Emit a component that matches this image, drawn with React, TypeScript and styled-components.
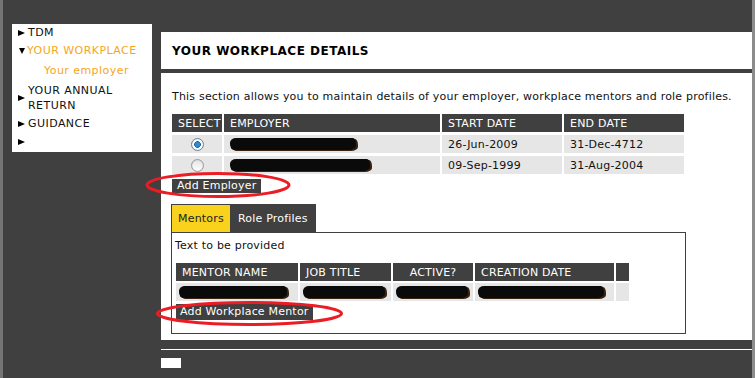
import { FunctionComponent } from "react";
import styled, { createGlobalStyle } from "styled-components";

const GlobalStyle = createGlobalStyle`
  html, body {
    margin: 0;
    padding: 0;
    background: #404040;
  }
  body {
    font-family: "DejaVu Sans", Verdana, sans-serif;
    font-size: 11px;
    letter-spacing: 0.2px;
    color: #111;
  }
`;

const DARK = "#404040";
const ORANGE = "#f5a623";

interface NavEntry {
  label: string;
  active?: boolean;
  open?: boolean;
  gap?: number;
}

const navItems: NavEntry[] = [
  { label: "TDM" },
  { label: "YOUR WORKPLACE", active: true, open: true, gap: 5 },
  { label: "YOUR ANNUAL RETURN" },
  { label: "GUIDANCE" },
  { label: "" },
];

const employers = [
  { selected: true, name: 126, start: "26-Jun-2009", end: "31-Dec-4712" },
  { selected: false, name: 140, start: "09-Sep-1999", end: "31-Aug-2004" },
];

const App: FunctionComponent = () => {
  return (
    <>
      <GlobalStyle />
      <Page>
        <Sidebar>
          {navItems.map((item, idx) => (
            <div key={idx}>
              <NavItem $active={item.active} $gap={item.gap}>
                <Arrow $open={item.open} />
                <span>{item.label}</span>
              </NavItem>
              {item.open && <SubItem>Your employer</SubItem>}
            </div>
          ))}
        </Sidebar>

        <MainColumn>
          <Panel>
            <PanelHeader>YOUR WORKPLACE DETAILS</PanelHeader>
            <PanelBody>
              <Description>
                This section allows you to maintain details of your employer,
                workplace mentors and role profiles.
              </Description>

              <EmployerTable>
                <HeadCell $center>SELECT</HeadCell>
                <HeadCell>EMPLOYER</HeadCell>
                <HeadCell>START DATE</HeadCell>
                <HeadCell>END DATE</HeadCell>
                {employers.map((row, idx) => (
                  <Row key={idx}>
                    <Cell $center>
                      <Radio $checked={row.selected} />
                    </Cell>
                    <Cell>
                      <Redacted $w={row.name} />
                    </Cell>
                    <Cell>{row.start}</Cell>
                    <Cell>{row.end}</Cell>
                  </Row>
                ))}
              </EmployerTable>

              <ActionButton>
                Add Employer
                <Circle $left={-27} $top={-7} $w={146} $h={26}>
                  <ellipse cx={73} cy={13} rx={71} ry={11.5} />
                </Circle>
              </ActionButton>

              <TabStrip>
                <Tab $active>Mentors</Tab>
                <Tab>Role Profiles</Tab>
              </TabStrip>
              <TabBox>
                <div>Text to be provided</div>
                <MentorTable>
                  <HeadCell>MENTOR NAME</HeadCell>
                  <HeadCell>JOB TITLE</HeadCell>
                  <HeadCell $center>ACTIVE?</HeadCell>
                  <HeadCell>CREATION DATE</HeadCell>
                  <HeadCell />
                  <Cell $tight>
                    <Redacted $w={108} />
                  </Cell>
                  <Cell $tight>
                    <Redacted $w={82} />
                  </Cell>
                  <Cell $tight>
                    <Redacted $w={72} />
                  </Cell>
                  <Cell $tight>
                    <Redacted $w={126} />
                  </Cell>
                  <Cell />
                </MentorTable>
                <ActionButton $mentor>
                  Add Workplace Mentor
                  <Circle $left={-20} $top={-3} $w={187} $h={25}>
                    <ellipse cx={93.5} cy={12.5} rx={92} ry={11} />
                  </Circle>
                </ActionButton>
              </TabBox>
            </PanelBody>
          </Panel>
          <Footer>
            <FooterChip />
          </Footer>
        </MainColumn>
      </Page>
    </>
  );
};

const Page = styled.div`
  width: 755px;
  height: 378px;
  box-sizing: border-box;
  overflow: hidden;
  border-left: 3px solid #747474;
  border-right: 3px solid #8c8c8c;
  padding: 24px 0 0 9px;
  display: grid;
  grid-template-columns: 140px 591px;
  column-gap: 9px;
  align-items: start;
`;

const Sidebar = styled.div`
  background: #fff;
  padding: 1px 0 0 6px;
  letter-spacing: 0.45px;
`;

const NavItem = styled.div<{ $active?: boolean; $gap?: number }>`
  display: flex;
  align-items: center;
  line-height: 15px;
  min-height: 15px;
  color: ${(p) => (p.$active ? ORANGE : "#111")};
  margin-bottom: ${(p) => p.$gap ?? 3}px;
`;

const Arrow = styled.span<{ $open?: boolean }>`
  flex: none;
  width: 0;
  height: 0;
  ${(p) =>
    p.$open
      ? `
    margin: 1px 2px 0 1px;
    border-top: 6px solid #000;
    border-left: 3.5px solid transparent;
    border-right: 3.5px solid transparent;
  `
      : `
    margin-right: 3px;
    border-left: 7px solid #000;
    border-top: 3.5px solid transparent;
    border-bottom: 3.5px solid transparent;
  `}
`;

const SubItem = styled.div`
  padding-left: 26px;
  line-height: 15px;
  color: ${ORANGE};
  margin-bottom: 5px;
`;

const MainColumn = styled.div`
  margin-top: 8px;
`;

const Panel = styled.div`
  background: #fff;
`;

const PanelHeader = styled.div`
  height: 37px;
  display: flex;
  align-items: center;
  padding-left: 11px;
  border-bottom: 4px solid ${DARK};
  font-weight: bold;
  font-size: 12px;
  letter-spacing: 0.5px;
  color: #000;
`;

const PanelBody = styled.div`
  padding: 16px 0 6px 11px;
`;

const Description = styled.div`
  line-height: 15px;
  margin-bottom: 10px;
`;

const EmployerTable = styled.div`
  display: grid;
  grid-template-columns: 50px 216px 120px 120px;
  gap: 3px 2px;
  width: max-content;
`;

const Row = styled.div`
  display: contents;
`;

const HeadCell = styled.div<{ $center?: boolean }>`
  height: 18px;
  line-height: 19px;
  padding: 0 6px;
  background: ${DARK};
  color: #fff;
  text-align: ${(p) => (p.$center ? "center" : "left")};
  white-space: nowrap;
`;

const Cell = styled.div<{ $center?: boolean; $tight?: boolean }>`
  height: 18px;
  line-height: 19px;
  padding: 0 ${(p) => (p.$tight ? 3 : 6)}px;
  background: #e6e6e6;
  color: #111;
  display: flex;
  align-items: center;
  justify-content: ${(p) => (p.$center ? "center" : "flex-start")};
  white-space: nowrap;
`;

const Radio = styled.span<{ $checked?: boolean }>`
  width: 11px;
  height: 11px;
  border-radius: 50%;
  border: 1px solid ${(p) => (p.$checked ? "#6e8296" : "#9a9a9a")};
  background: ${(p) =>
    p.$checked
      ? "radial-gradient(circle, #2b8bd6 0 2.2px, #0f5a97 3px, #ffffff 3.6px)"
      : "linear-gradient(#e4e4e4, #ffffff)"};
  box-shadow: inset 0 0 1px #bbb;
`;

const Redacted = styled.span<{ $w: number }>`
  display: inline-block;
  width: ${(p) => p.$w}px;
  height: 12px;
  background: #0a0a0a;
  border-radius: 6px 3px 7px 4px / 5px 6px 4px 6px;
  filter: blur(0.6px);
  box-shadow: 2px 1px 0 #3a2410;
`;

const ActionButton = styled.div<{ $mentor?: boolean }>`
  position: relative;
  display: inline-block;
  margin-top: ${(p) => (p.$mentor ? 3 : 5)}px;
  margin-left: ${(p) => (p.$mentor ? 1 : 0)}px;
  padding: 0 ${(p) => (p.$mentor ? 4 : 5)}px;
  line-height: ${(p) => (p.$mentor ? 16 : 14)}px;
  background: ${DARK};
  color: #fff;
  white-space: nowrap;
`;

const Circle = styled.svg<{ $left: number; $top: number; $w: number; $h: number }>`
  position: absolute;
  left: ${(p) => p.$left}px;
  top: ${(p) => p.$top}px;
  width: ${(p) => p.$w}px;
  height: ${(p) => p.$h}px;
  overflow: visible;
  pointer-events: none;
  fill: none;
  stroke: #ec1c24;
  stroke-width: 3px;
`;

const TabStrip = styled.div`
  display: flex;
  width: max-content;
  margin: 11px 0 0 -1px;
  padding: 1px 0 0 1px;
  background: ${DARK};
`;

const Tab = styled.div<{ $active?: boolean }>`
  line-height: 27px;
  padding: 0 ${(p) => (p.$active ? 6 : 8)}px;
  background: ${(p) => (p.$active ? "#f8d21c" : "transparent")};
  color: ${(p) => (p.$active ? "#222" : "#fff")};
`;

const TabBox = styled.div`
  width: 510px;
  margin-left: -1px;
  border: 1px solid ${DARK};
  padding: 5px 0 13px 3px;
  line-height: 15px;
`;

const MentorTable = styled.div`
  display: grid;
  grid-template-columns: 122px 91px 80px 139px 13px;
  gap: 2px;
  width: max-content;
  margin: 10px 0 0 1px;
`;

const Footer = styled.div`
  margin-top: 9px;
  border-top: 1px solid #fff;
  padding-top: 8px;
`;

const FooterChip = styled.div`
  width: 20px;
  height: 10px;
  background: #fff;
`;

export default App;
